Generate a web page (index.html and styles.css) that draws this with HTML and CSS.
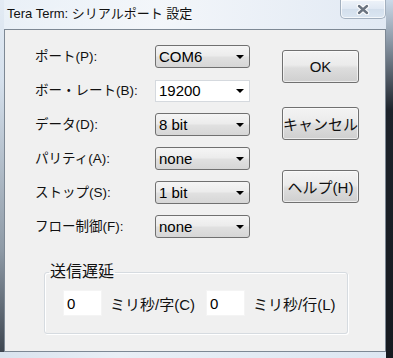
FILE: index.html
```html
<!DOCTYPE html>
<html lang="ja">
<head>
    <meta charset="UTF-8" />
    <title>Tera Term: シリアルポート 設定</title>
    <link rel="stylesheet" href="styles.css">
</head>
<body>
    <div class="window">
        <div class="titlebar">
            <span class="title">Tera Term: シリアルポート 設定</span>
            <button class="close" aria-label="閉じる">
                <svg width="14" height="11" viewBox="0 0 14 11">
                    <path d="M3 2 L11 9 M11 2 L3 9" stroke="#ffffff" stroke-width="4.5" stroke-linecap="round" />
                    <path d="M3 2 L11 9 M11 2 L3 9" stroke="#6b7480" stroke-width="2.4" stroke-linecap="round" />
                </svg>
            </button>
        </div>

        <div class="client">
            <div class="top">
                <div class="fields">
                    <label>ポート(P):</label>
                    <div class="combo">COM6<i class="arrow"></i></div>

                    <label>ボー・レート(B):</label>
                    <div class="combo edit">19200<i class="arrow"></i></div>

                    <label>データ(D):</label>
                    <div class="combo">8 bit<i class="arrow"></i></div>

                    <label>パリティ(A):</label>
                    <div class="combo">none<i class="arrow"></i></div>

                    <label>ストップ(S):</label>
                    <div class="combo">1 bit<i class="arrow"></i></div>

                    <label>フロー制御(F):</label>
                    <div class="combo">none<i class="arrow"></i></div>
                </div>

                <div class="buttons">
                    <button class="btn">OK</button>
                    <button class="btn">キャンセル</button>
                    <button class="btn help">ヘルプ(H)</button>
                </div>
            </div>

            <fieldset class="group">
                <legend>送信遅延</legend>
                <div class="delay">
                    <input type="text" value="0" />
                    <span class="unit">ミリ秒/字(C)</span>
                    <input type="text" value="0" />
                    <span class="unit">ミリ秒/行(L)</span>
                </div>
            </fieldset>
        </div>
    </div>
</body>
</html>
```

FILE: styles.css
```css
:root {
    --face: #f0f0f0;
    --edge: #707070;
    --text: #000000;
    --ui-font: "Liberation Sans", "Noto Sans CJK JP", sans-serif;
}

* {
    box-sizing: border-box;
    margin: 0;
    padding: 0;
}

body {
    font-family: var(--ui-font);
    font-size: 15px;
    color: var(--text);
    width: 393px;
    height: 358px;
    overflow: hidden;
}

/* Fensterrahmen (Aero) */
.window {
    width: 393px;
    height: 358px;
    display: grid;
    grid-template-rows: 29px 323px 6px;
    background:
        linear-gradient(#cbd9e8 0, #8d9aa8 40px, #1d232b 110px, #161a20 100%) right top / 7px 100% no-repeat,
        linear-gradient(to right, #d9e3ee 0, #e9eff6 30%, #dde7f2 100%) left bottom / 100% 6px no-repeat,
        linear-gradient(#e3ebf4 0, #d6e1ed 80px, #8e9aa6 250px, #3a424c 358px) left top / 4px 100% no-repeat,
        linear-gradient(to right, #e9f0f7 0%, #f3f6fa 40%, #e1e9f3 100%);
}

.titlebar {
    display: flex;
    justify-content: space-between;
    align-items: flex-start;
    padding: 0 7px 0 7px;
}

.title {
    margin-top: 5px;
    line-height: 18px;
    font-size: 13px;
    color: #111111;
    text-shadow: 0 0 6px #ffffff;
}

.close {
    width: 46px;
    height: 19px;
    border: 1px solid #a3b0bf;
    border-top: none;
    border-radius: 0 0 5px 5px;
    background: linear-gradient(#eef3f9, #dfe8f3 50%, #d3dfec 51%, #dbe6f2);
    display: flex;
    align-items: center;
    justify-content: center;
    box-shadow: inset 0 0 0 1px rgba(255, 255, 255, 0.7);
}

/* Client-Bereich */
.client {
    margin: 0 7px 0 4px;
    background: var(--face);
    border: 1px solid #7d8894;
    padding: 15px 0 0 30px;
}

.top {
    display: flex;
    align-items: flex-start;
}

.fields {
    display: grid;
    grid-template-columns: 120px 95px;
    grid-auto-rows: 23px;
    row-gap: 11px;
    align-items: center;
}

.fields label {
    font-size: 13.5px;
    line-height: 23px;
    color: #111111;
    white-space: nowrap;
}

.combo {
    height: 23px;
    display: flex;
    align-items: center;
    justify-content: space-between;
    padding: 0 5px 0 3px;
    border: 1px solid var(--edge);
    border-radius: 3px;
    background: linear-gradient(#f5f5f5 0%, #ececec 45%, #e0e0e0 55%, #d6d6d6 100%);
    line-height: 20px;
}

.combo.edit {
    height: 22px;
    background: #ffffff;
    border-color: #d5d9de;
    border-radius: 0;
}

.arrow {
    width: 0;
    height: 0;
    border-left: 4px solid transparent;
    border-right: 4px solid transparent;
    border-top: 4px solid #000000;
}

.buttons {
    display: flex;
    flex-direction: column;
    gap: 24px;
    margin: 5px 0 0 32px;
}

.btn {
    width: 77px;
    height: 33px;
    border: 1px solid var(--edge);
    border-radius: 3px;
    background: linear-gradient(#f3f3f3 0%, #ebebeb 45%, #dddddd 55%, #cfcfcf 100%);
    box-shadow: inset 0 0 0 1px rgba(255, 255, 255, 0.6);
    font-family: var(--ui-font);
    font-size: 15px;
    color: #111111;
    white-space: nowrap;
    padding: 0;
}

.help {
    margin-top: 6px;
}

/* Gruppe 送信遅延 */
.group {
    width: 303px;
    height: 71px;
    margin: 25px 0 0 9px;
    border: 1px solid #d6dbe0;
    border-radius: 3px;
    box-shadow: inset 1px 1px 0 #ffffff, 1px 1px 0 #ffffff;
    padding: 0 0 0 18px;
}

.group legend {
    font-size: 16px;
    line-height: 18px;
    margin-left: -14px;
    padding: 0 1px;
    color: #111111;
}

.delay {
    display: flex;
    align-items: center;
    margin-top: 9px;
}

.delay input {
    width: 39px;
    height: 26px;
    border: 1px solid #f4f4f4;
    background: #ffffff;
    font-family: var(--ui-font);
    font-size: 15px;
    padding: 0 3px;
    margin-right: 8px;
    outline: none;
}

.unit {
    margin-right: 11px;
    white-space: nowrap;
    color: #111111;
}
```
